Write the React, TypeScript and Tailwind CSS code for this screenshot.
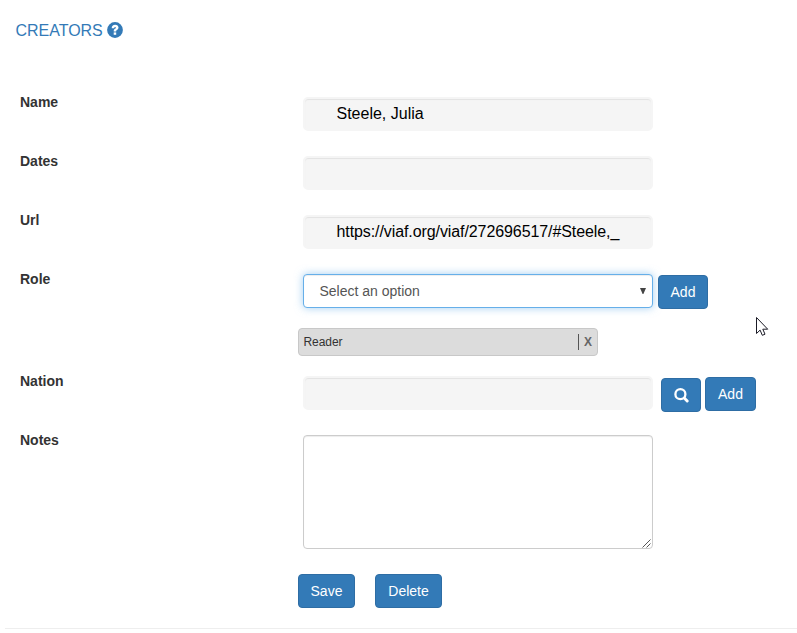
import type { ReactNode } from "react";

const buttonClass =
  "flex h-[34px] shrink-0 items-center justify-center rounded border border-[#2e6da4] bg-[#337ab7] text-sm text-white";

function Row({ label, className, children }: { label: string; className: string; children: ReactNode }) {
  return (
    <div className={`flex items-start ${className}`}>
      <label className="mt-[-5px] w-[283px] shrink-0 text-sm leading-5 font-bold">{label}</label>
      {children}
    </div>
  );
}

function Field({ value = "", textClass = "" }: { value?: string; textClass?: string }) {
  return (
    <div
      className={`h-[34px] w-[350px] shrink-0 overflow-hidden rounded-[5px] border-2 border-[#f5f5f5] bg-[#f5f5f5] pl-[31.5px] text-base leading-[29px] whitespace-nowrap text-black shadow-[inset_0_1px_1px_rgba(0,0,0,0.075)] ${textClass}`}
    >
      {value}
    </div>
  );
}

function HelpIcon() {
  return (
    <svg className="mt-[-3px] ml-1 h-4 w-4" viewBox="0 0 16 16">
      <circle cx="8" cy="8" r="7.9" fill="#337ab7" />
      <path
        d="M4.7 6.2C4.7 4 6 2.8 8.2 2.8c1.9 0 3.3 1.1 3.3 2.8 0 1.3-.7 2-1.5 2.5-.6.4-.8.6-.8 1.3H6.7c0-1.4.3-2 1.3-2.6.7-.4.9-.6.9-1.1 0-.5-.3-.7-.8-.7-.6 0-.9.4-.9 1.2Z"
        fill="#fff"
      />
      <path d="M6.7 10.4h2.5v2.4H6.7z" fill="#fff" />
    </svg>
  );
}

export default function App() {
  return (
    <main className="relative h-[633px] w-[797px] overflow-hidden bg-white font-['Liberation_Sans',Arial,sans-serif] text-[#333]">
      <h1 className="mt-[22px] flex h-[18px] items-center pl-[15.5px] text-base leading-[18px] text-[#337ab7]">
        <span className="tracking-[-0.02px]">CREATORS</span>
        <HelpIcon />
      </h1>

      <form className="pt-[57px] pl-5">
        <Row label="Name" className="h-[59px]">
          <Field value="Steele, Julia" />
        </Row>
        <Row label="Dates" className="h-[59px]">
          <Field />
        </Row>
        <Row label="Url" className="h-[59px]">
          <Field value="https://viaf.org/viaf/272696517/#Steele,_" textClass="tracking-[-0.09px]" />
        </Row>
        <Row label="Role" className="h-[54px]">
          <div className="flex h-[34px] w-[350px] shrink-0 items-center justify-between rounded border border-[#66afe9] bg-white pr-[6px] pl-[15.5px] text-sm text-[#555] shadow-[inset_0_1px_1px_rgba(0,0,0,0.075),0_0_8px_rgba(102,175,233,0.6)]">
            <span>Select an option</span>
            <svg className="h-[6px] w-[6px]" viewBox="0 0 6 6">
              <path d="M0 0h6L3.4 6h-.8Z" fill="#444" />
            </svg>
          </div>
          <button type="button" className={`${buttonClass} mt-px ml-[5px] w-[50px]`}>Add</button>
        </Row>

        <div className="ml-[278px] flex h-7 w-[300px] items-center justify-between rounded border border-[#c8c8c8] bg-[#dcdcdc] pr-[5px] pl-[4.5px] text-xs">
          <span className="tracking-[-0.05px]">Reader</span>
          <span className="flex h-4 items-center border-l border-[#555] pl-[5px] font-bold text-[#666]">X</span>
        </div>

        <Row label="Nation" className="mt-5 h-[59px]">
          <Field />
          <button type="button" aria-label="Search" className={`${buttonClass} mt-[2px] ml-2 w-10`}>
            <svg className="h-[15px] w-[15px]" viewBox="0 0 15 15" fill="none" stroke="#fff">
              <circle cx="6.4" cy="6.2" r="5" strokeWidth="2.3" />
              <path d="m10.2 10 3 3" strokeWidth="2.9" strokeLinecap="round" />
            </svg>
          </button>
          <button type="button" className={`${buttonClass} mt-px ml-1 w-[51px]`}>Add</button>
        </Row>
        <Row label="Notes" className="h-[139px]">
          <div className="flex h-[114px] w-[350px] items-end justify-end rounded border border-[#ccc] shadow-[inset_0_1px_1px_rgba(0,0,0,0.075)]">
            <svg className="mr-px h-[9px] w-[9px]" viewBox="0 0 9 9" stroke="#444" strokeWidth="0.9">
              <path d="M.5 8.5l8-8M4.5 8.5l4-4" />
            </svg>
          </div>
        </Row>
        <div className="ml-[278px] flex gap-5">
          <button type="button" className={`${buttonClass} w-[57px]`}>Save</button>
          <button type="button" className={`${buttonClass} w-[67px]`}>Delete</button>
        </div>
      </form>
      <hr className="mt-5 ml-[5px] border-t border-[#eee]" />

      <svg className="absolute top-[317px] left-[756px] h-[20px] w-[13px]" viewBox="0 0 13 20">
        <path d="M.5.5v16l3.6-3.4 2.2 5.2 2.7-1.1-2.2-5h4.9Z" fill="#fff" stroke="#1b1b26" />
      </svg>
    </main>
  );
}
